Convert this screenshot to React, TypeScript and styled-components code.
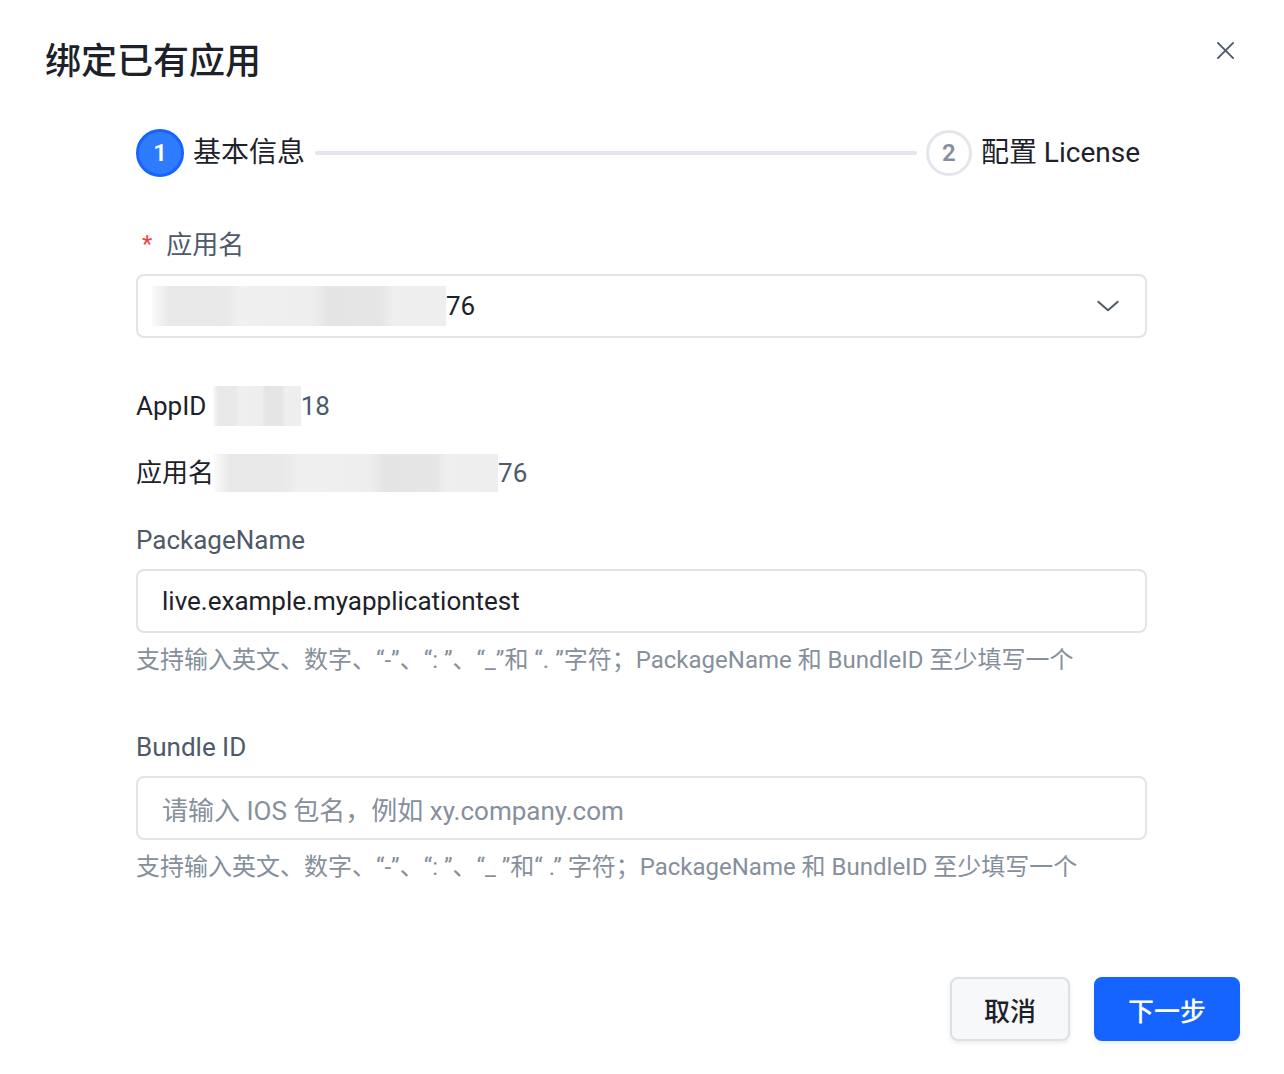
import React from 'react';
import styled, { createGlobalStyle } from 'styled-components';

const GlobalStyle = createGlobalStyle`
  html, body {
    margin: 0;
    padding: 0;
    background: #ffffff;
  }
  body {
    font-family: Roboto, "Noto Sans CJK SC", "Noto Sans", sans-serif;
    color: #1d2129;
    -webkit-font-smoothing: antialiased;
  }
  * { box-sizing: border-box; }
`;

const Dialog = styled.div`
  width: 1284px;
  height: 1074px;
  padding: 40px 47px 0 45px;
  display: flex;
  flex-direction: column;
`;

const Header = styled.div`
  display: flex;
  align-items: center;
  justify-content: space-between;
  height: 44px;
`;

const Title = styled.h1`
  margin: 0;
  font-size: 36px;
  line-height: 44px;
  font-weight: 500;
  color: #1d2129;
`;

const CloseButton = styled.button`
  border: none;
  background: none;
  padding: 0;
  width: 24px;
  height: 24px;
  margin-top: -24px;
  display: flex;
  align-items: center;
  justify-content: center;
  cursor: pointer;
  color: #4e5969;
`;

const Body = styled.div`
  padding-left: 91px;
  width: 1102px;
  display: flex;
  flex-direction: column;
`;

const Steps = styled.div`
  margin-top: 45px;
  margin-right: 7px;
  display: flex;
  align-items: center;
  height: 48px;
`;

const StepDot = styled.div<{ $active?: boolean }>`
  width: ${(p) => (p.$active ? 48 : 46)}px;
  height: ${(p) => (p.$active ? 48 : 46)}px;
  border-radius: 50%;
  flex-shrink: 0;
  display: flex;
  align-items: center;
  justify-content: center;
  font-size: 24px;
  font-weight: 600;
  background: ${(p) => (p.$active ? '#2f7bff' : '#ffffff')};
  border: 3px solid ${(p) => (p.$active ? '#1664ff' : '#e5e6eb')};
  color: ${(p) => (p.$active ? '#ffffff' : '#86909c')};
`;

const StepLabel = styled.span`
  font-size: 28px;
  line-height: 36px;
  color: #1d2129;
  margin-left: 9px;
  white-space: nowrap;
`;

const StepLine = styled.div`
  flex: 1;
  height: 4px;
  background: #e5e6eb;
  border-radius: 2px;
  margin: 0 9px 0 10px;
`;

const FieldLabel = styled.div<{ $top: number }>`
  margin-top: ${(p) => p.$top}px;
  font-size: 26px;
  line-height: 34px;
  color: #4e5969;
  display: flex;
  align-items: center;
`;

const Required = styled.span`
  color: #f53f3f;
  font-size: 24px;
  margin: 0 14px 0 6px;
  position: relative;
  top: -1px;
`;

const Box = styled.div`
  margin-top: 12px;
  height: 64px;
  border: 2px solid #e0e3e8;
  border-radius: 8px;
  display: flex;
  align-items: center;
  padding: 0 24px 0 24px;
  font-size: 26px;
  color: #1d2129;
`;

const SelectBox = styled(Box)`
  padding-left: 14px;
  justify-content: space-between;
`;

const Value = styled.span<{ $placeholder?: boolean }>`
  color: ${(p) => (p.$placeholder ? '#86909c' : '#1d2129')};
  display: flex;
  align-items: center;
`;

const Blur = styled.span<{ $w: number; $h: number }>`
  display: inline-block;
  width: ${(p) => p.$w}px;
  height: ${(p) => p.$h}px;
  background: linear-gradient(
    90deg,
    #fafafa 0%,
    #e8e8e8 6%,
    #e9e9e9 25%,
    #f0f0f0 30%,
    #eeeeee 55%,
    #e4e4e4 60%,
    #e6e6e6 78%,
    #efefef 82%,
    #eeeeee 100%
  );
`;

const InfoRow = styled.div<{ $top: number }>`
  margin-top: ${(p) => p.$top}px;
  display: flex;
  align-items: center;
  font-size: 26px;
  line-height: 34px;
  color: #1d2129;
  height: 34px;
`;

const InfoValue = styled.span`
  color: #4e5969;
  display: flex;
  align-items: center;
`;

const Help = styled.div`
  margin-top: 11px;
  font-size: 24px;
  line-height: 32px;
  color: #86909c;
  white-space: nowrap;
`;

const Footer = styled.div`
  margin-top: auto;
  margin-bottom: 33px;
  margin-right: -3px;
  display: flex;
  justify-content: flex-end;
  gap: 24px;
`;

const Button = styled.button<{ $primary?: boolean }>`
  height: 64px;
  min-width: ${(p) => (p.$primary ? 146 : 120)}px;
  padding: 0 24px;
  border-radius: 8px;
  font-family: inherit;
  font-size: 26px;
  font-weight: 500;
  cursor: pointer;
  background: ${(p) => (p.$primary ? '#1664ff' : '#f7f8fa')};
  color: ${(p) => (p.$primary ? '#ffffff' : '#1d2129')};
  border: 2px solid ${(p) => (p.$primary ? '#1664ff' : '#dde1e7')};
  box-shadow: 0 2px 4px rgba(0, 0, 0, 0.08);
`;

const Chevron = () => (
  <svg width="26" height="26" viewBox="0 0 24 24" fill="none" stroke="#4e5969" strokeWidth="1.8" strokeLinecap="round" strokeLinejoin="round">
    <path d="M3 8l9 8 9-8" />
  </svg>
);

const CloseIcon = () => (
  <svg width="19" height="19" viewBox="0 0 20 20" fill="none" stroke="#4e5969" strokeWidth="2" strokeLinecap="round">
    <path d="M2 2l16 16M18 2L2 18" />
  </svg>
);

const App: React.FC = () => {
  return (
    <>
      <GlobalStyle />
      <Dialog>
        <Header>
          <Title>绑定已有应用</Title>
          <CloseButton aria-label="关闭">
            <CloseIcon />
          </CloseButton>
        </Header>

        <Body>
          <Steps>
            <StepDot $active>1</StepDot>
            <StepLabel>基本信息</StepLabel>
            <StepLine />
            <StepDot>2</StepDot>
            <StepLabel>配置 License</StepLabel>
          </Steps>

          <FieldLabel $top={51}>
            <Required>*</Required>应用名
          </FieldLabel>
          <SelectBox>
            <Value>
              <Blur $w={294} $h={40} />
              76
            </Value>
            <Chevron />
          </SelectBox>

          <InfoRow $top={51}>
            AppID&nbsp;
            <InfoValue>
              <Blur $w={88} $h={40} />
              18
            </InfoValue>
          </InfoRow>
          <InfoRow $top={33}>
            应用名
            <InfoValue>
              <Blur $w={284} $h={38} />
              76
            </InfoValue>
          </InfoRow>

          <FieldLabel $top={33}>PackageName</FieldLabel>
          <Box>
            <Value>live.example.myapplicationtest</Value>
          </Box>
          <Help>支持输入英文、数字、“-”、“: ”、“_”和 “. ”字符；PackageName 和 BundleID 至少填写一个</Help>

          <FieldLabel $top={54}>Bundle ID</FieldLabel>
          <Box>
            <Value $placeholder>请输入 IOS 包名，例如 xy.company.com</Value>
          </Box>
          <Help>支持输入英文、数字、“-”、“: ”、“_ ”和“ .” 字符；PackageName 和 BundleID 至少填写一个</Help>
        </Body>

        <Footer>
          <Button>取消</Button>
          <Button $primary>下一步</Button>
        </Footer>
      </Dialog>
    </>
  );
};

export default App;
